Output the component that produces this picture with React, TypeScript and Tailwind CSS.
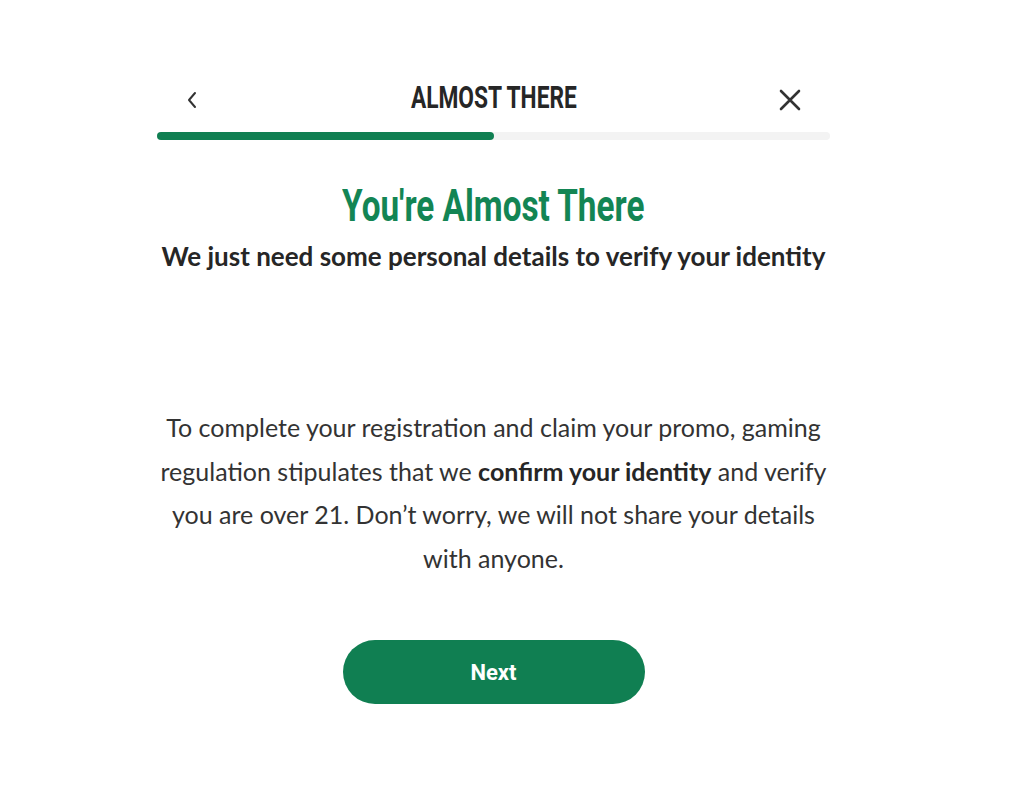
import React from 'react';

const ChevronLeft = () => (
  <svg width="14" height="20" viewBox="0 0 14 20" fill="none">
    <path d="M10 3 L4 10 L10 17" stroke="#333" strokeWidth="2" strokeLinecap="round" strokeLinejoin="round" />
  </svg>
);

const CloseIcon = () => (
  <svg width="24" height="24" viewBox="0 0 24 24" fill="none">
    <path d="M3 3 L21 21 M21 3 L3 21" stroke="#333" strokeWidth="2.6" strokeLinecap="round" />
  </svg>
);

export default function App() {
  const progress = 50;

  return (
    <div className="min-h-[791px] w-full bg-white font-['Lato',sans-serif] text-[#2b2b2b]">
      <div className="ml-[157px] flex w-[673px] flex-col items-center pt-[82px]">
        {/* header */}
        <div className="flex h-[36px] w-full items-center justify-between px-[28px]">
          <button className="flex h-8 w-8 items-center justify-start">
            <ChevronLeft />
          </button>
          <h1 className="mb-[6px] inline-block scale-x-[0.71] font-['Roboto',sans-serif] text-[32px] leading-[36px] font-bold text-[#262626]">
            ALMOST THERE
          </h1>
          <button className="flex h-8 w-8 items-center justify-end">
            <CloseIcon />
          </button>
        </div>

        {/* progress */}
        <div className="mt-[14px] h-[8px] w-full rounded-full bg-[#f3f3f3]">
          <div className="h-full rounded-full bg-[#107f52]" style={{ width: `${progress}%` }} />
        </div>

        <h2 className="mt-[40px] inline-block scale-x-[0.74] font-['Roboto',sans-serif] text-[45px] leading-[52px] font-bold text-[#138554]">
          You're Almost There
        </h2>
        <p className="mt-[8px] text-[26px] leading-[32px] font-bold text-[#262626]">
          We just need some personal details to verify your identity
        </p>

        <p className="mt-[134px] text-center text-[25px] leading-[43.5px] text-[#333]">
          To complete your registration and claim your promo, gaming regulation stipulates that we{' '}
          <span className="font-bold text-[#262626]">confirm your identity</span> and verify you are over 21.
          Don’t worry, we will not share your details with anyone.
        </p>

        <button className="mt-[60px] h-[64px] w-[302px] rounded-full bg-[#107f52] font-['Roboto',sans-serif] text-[22px] font-bold text-white">
          Next
        </button>
      </div>
    </div>
  );
}
